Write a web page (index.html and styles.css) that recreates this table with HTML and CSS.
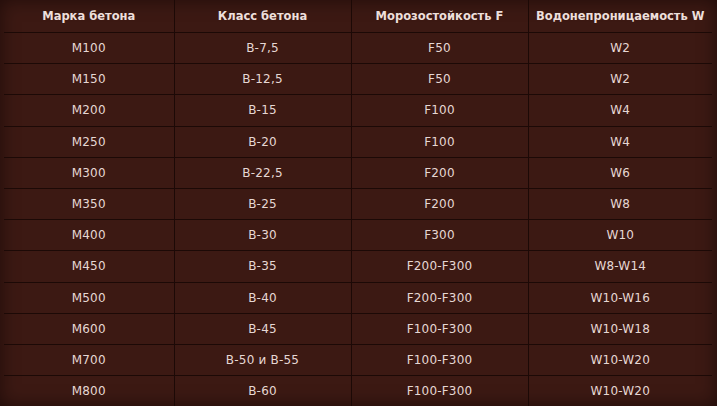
FILE: index.html
```html
<!DOCTYPE html>
<html lang="ru">
<head>
<meta charset="utf-8">
<link rel="stylesheet" href="styles.css">
</head>
<body>
<div class="wrap">
<table class="grid">
<colgroup><col class="c1"><col class="c2"><col class="c3"><col class="c4"></colgroup>
<thead>
<tr><th>Марка бетона</th><th>Класс бетона</th><th>Морозостойкость F</th><th>Водонепроницаемость W</th></tr>
</thead>
<tbody>
<tr><td>M100</td><td>B-7,5</td><td>F50</td><td>W2</td></tr>
<tr><td>M150</td><td>B-12,5</td><td>F50</td><td>W2</td></tr>
<tr><td>M200</td><td>B-15</td><td>F100</td><td>W4</td></tr>
<tr><td>M250</td><td>B-20</td><td>F100</td><td>W4</td></tr>
<tr><td>M300</td><td>B-22,5</td><td>F200</td><td>W6</td></tr>
<tr><td>M350</td><td>B-25</td><td>F200</td><td>W8</td></tr>
<tr><td>M400</td><td>B-30</td><td>F300</td><td>W10</td></tr>
<tr><td>M450</td><td>B-35</td><td>F200-F300</td><td>W8-W14</td></tr>
<tr><td>M500</td><td>B-40</td><td>F200-F300</td><td>W10-W16</td></tr>
<tr><td>M600</td><td>B-45</td><td>F100-F300</td><td>W10-W18</td></tr>
<tr><td>M700</td><td>B-50 и B-55</td><td>F100-F300</td><td>W10-W20</td></tr>
<tr><td>M800</td><td>B-60</td><td>F100-F300</td><td>W10-W20</td></tr>
</tbody>
</table>
</div>
</body>
</html>
```
FILE: styles.css
```css
html, body {
  margin: 0;
  padding: 0;
  background: #3c1913;
}
body {
  width: 717px;
  height: 406px;
  overflow: hidden;
  box-shadow: inset 0 0 18px rgba(10, 2, 0, 0.55);
}
.wrap {
  padding: 0 5px 0 4px;
}
.grid {
  border-collapse: collapse;
  table-layout: fixed;
  width: 708px;
  font-family: "DejaVu Sans", Verdana, sans-serif;
  color: #e6d7d3;
}
.c1 { width: 170px; }
.c2 { width: 177px; }
.c3 { width: 177px; }
.c4 { width: 184px; }
.grid th, .grid td {
  text-align: center;
  padding: 0;
  border: 1px solid #1c0906;
  white-space: nowrap;
}
.grid th {
  height: 32px;
  font-size: 11.5px;
  font-weight: bold;
  color: #eddfdb;
  border-top: none;
}
.grid td {
  height: 30.2px;
  font-size: 12px;
  letter-spacing: 0.2px;
}
.grid tr > :first-child { border-left: none; }
.grid tr > :last-child { border-right: none; }
.grid tbody tr:last-child td { border-bottom: none; }
```
